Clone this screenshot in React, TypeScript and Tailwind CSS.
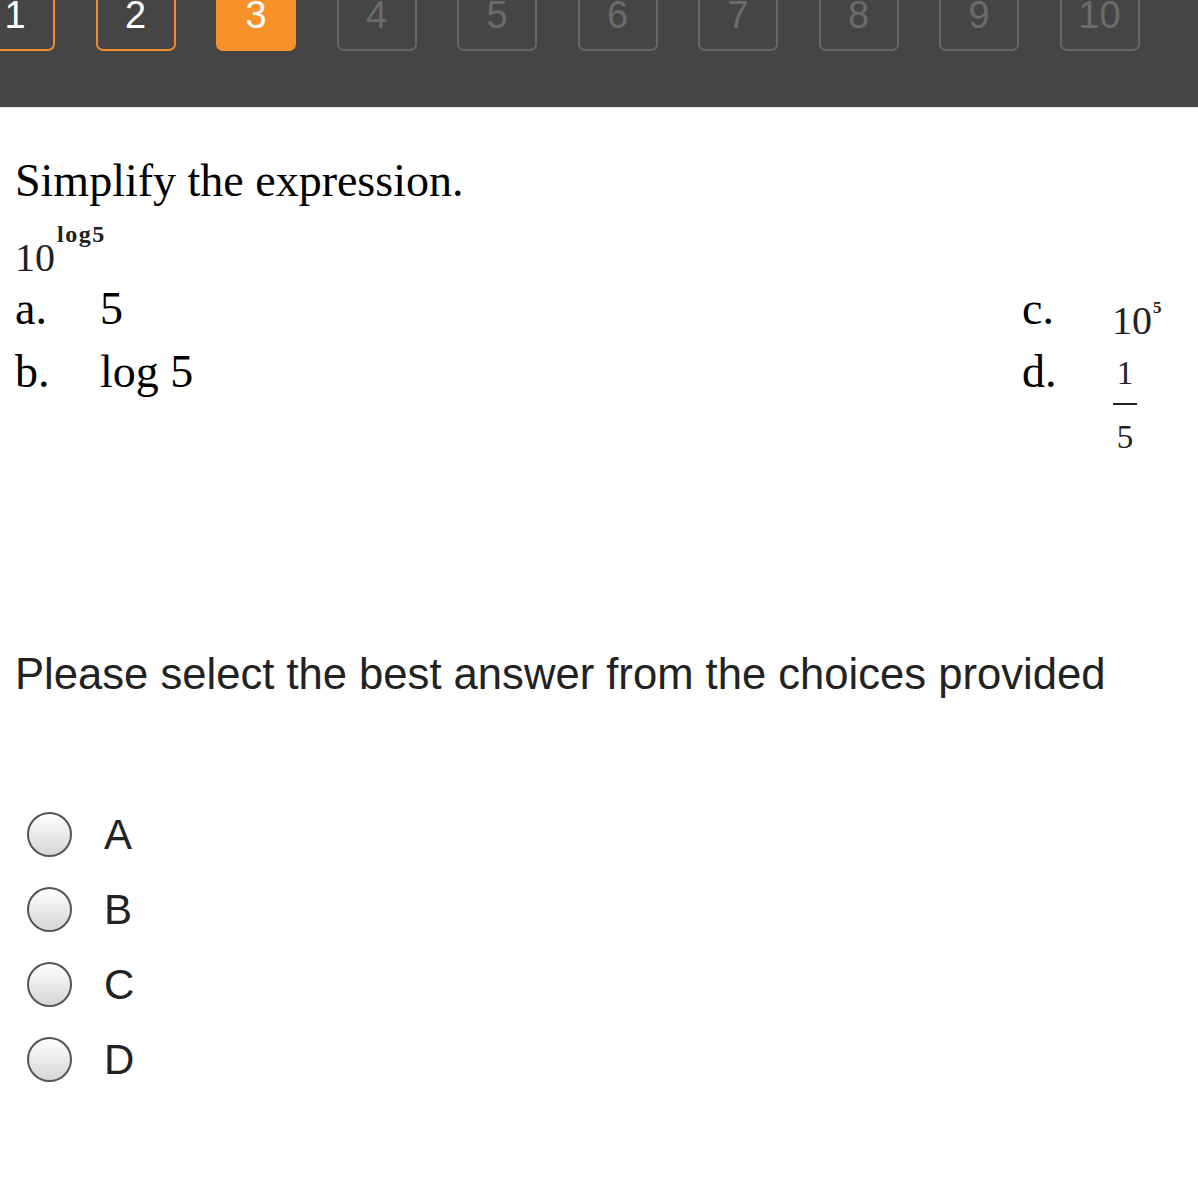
import React from "react";

type Status = "done" | "current" | "todo";

const steps: { n: number; s: Status }[] = [
  { n: 1, s: "done" },
  { n: 2, s: "done" },
  { n: 3, s: "current" },
  { n: 4, s: "todo" },
  { n: 5, s: "todo" },
  { n: 6, s: "todo" },
  { n: 7, s: "todo" },
  { n: 8, s: "todo" },
  { n: 9, s: "todo" },
  { n: 10, s: "todo" },
];

const statusClass: Record<Status, string> = {
  done: "border-[#ee8e2c] text-white",
  current: "border-[#f7922a] bg-[#f7922a] text-white",
  todo: "border-[#666666] text-[#6b6b6b]",
};

export default function App() {
  return (
    <div className="w-[1198px] min-h-[1200px] bg-white overflow-hidden">
      {/* top step bar */}
      <div className="h-[108px] bg-[#454545] border-b border-[#e2e2e2] overflow-hidden">
        <div className="flex gap-[40.5px] -ml-[25px] -mt-[29px]">
          {steps.map((st) => (
            <div
              key={st.n}
              className={`w-[80px] h-[80px] shrink-0 rounded-[7px] border-2 flex items-end justify-center pb-[15px] text-[38px] leading-none font-['Liberation_Sans',Arial,sans-serif] ${statusClass[st.s]}`}
            >
              {st.n}
            </div>
          ))}
        </div>
      </div>

      <div className="pl-[15px] font-['Liberation_Serif','Times_New_Roman',serif] text-black">
        <div className="mt-[50px] h-[46px] text-[46px] leading-[46px]">Simplify the expression.</div>

        <div className="mt-[34px] h-[40px] flex items-start text-[#222222]">
          <span className="text-[40px] leading-[40px]">10</span>
          <span className="-mt-[16px] ml-[2px] text-[24px] leading-none font-bold tracking-[1.5px]">log5</span>
        </div>

        <div className="mt-[8px] grid grid-cols-[85px_922px_90px_1fr] grid-rows-[63px_63px] text-[46px] leading-[46px]">
          <div>a.</div>
          <div>5</div>
          <div>c.</div>
          <div className="pt-[15px] flex items-start text-[#222222]">
            <span className="text-[40px] leading-[40px]">10</span>
            <span className="-mt-[2px] ml-[1px] text-[17px] leading-none font-bold">5</span>
          </div>

          <div>b.</div>
          <div>log 5</div>
          <div>d.</div>
          <div className="w-[26px] pt-[8px] flex flex-col items-center text-[#222222]">
            <div className="text-[33px] leading-[33px]">1</div>
            <div className="mt-[13px] w-[24px] border-t-[2px] border-solid border-[#222222]"></div>
            <div className="mt-[16px] text-[33px] leading-[33px]">5</div>
          </div>
        </div>

        <div className="mt-[240px] text-[43.6px] leading-[44px] text-[#222222] font-['Liberation_Sans',Arial,sans-serif]">
          Please select the best answer from the choices provided
        </div>

        <div className="mt-[101px] flex flex-col font-['Liberation_Sans',Arial,sans-serif]">
          {["A", "B", "C", "D"].map((l) => (
            <div key={l} className="h-[75px] flex items-center gap-[32px] pl-[12px]">
              <span className="w-[45px] h-[45px] shrink-0 rounded-full border-[2.5px] border-[#555555] bg-linear-to-b from-white to-[#d6d6d6]" />
              <span className="text-[42px] leading-none text-[#222222]">{l}</span>
            </div>
          ))}
        </div>
      </div>
    </div>
  );
}
